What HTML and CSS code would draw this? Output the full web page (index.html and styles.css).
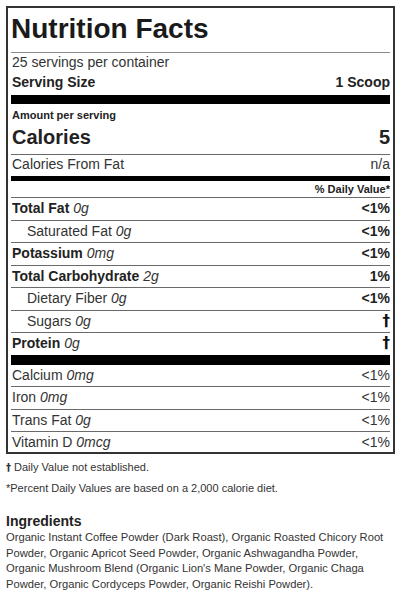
FILE: index.html
```html
<!DOCTYPE html>
<html lang="en">
<head>
<meta charset="utf-8">
<title>Nutrition Facts</title>
<link rel="stylesheet" href="styles.css">
</head>
<body>
<div class="label">
  <h1 class="title">Nutrition Facts</h1>
  <div class="servings">25 servings per container</div>
  <div class="row serving-size"><span>Serving Size</span><span>1 Scoop</span></div>
  <div class="bar bar-lg"></div>
  <div class="amount">Amount per serving</div>
  <div class="row calories"><span>Calories</span><span>5</span></div>
  <div class="row cff"><span>Calories From Fat</span><span>n/a</span></div>
  <div class="bar bar-md"></div>
  <div class="dv-head">% Daily Value*</div>

  <div class="row nut"><span><b>Total Fat</b> <i>0g</i></span><b>&lt;1%</b></div>
  <div class="row nut sub"><span>Saturated Fat <i>0g</i></span><b>&lt;1%</b></div>
  <div class="row nut"><span><b>Potassium</b> <i>0mg</i></span><b>&lt;1%</b></div>
  <div class="row nut"><span><b>Total Carbohydrate</b> <i>2g</i></span><b>1%</b></div>
  <div class="row nut sub"><span>Dietary Fiber <i>0g</i></span><b>&lt;1%</b></div>
  <div class="row nut sub"><span>Sugars <i>0g</i></span><b class="dagger">†</b></div>
  <div class="row nut last"><span><b>Protein</b> <i>0g</i></span><b class="dagger">†</b></div>

  <div class="bar bar-xl"></div>

  <div class="row nut"><span>Calcium <i>0mg</i></span><span>&lt;1%</span></div>
  <div class="row nut"><span>Iron <i>0mg</i></span><span>&lt;1%</span></div>
  <div class="row nut"><span>Trans Fat <i>0g</i></span><span>&lt;1%</span></div>
  <div class="row nut final"><span>Vitamin D <i>0mcg</i></span><span>&lt;1%</span></div>
</div>

<p class="note note-first"><span class="note-dagger">†</span> Daily Value not established.</p>
<p class="note">*Percent Daily Values are based on a 2,000 calorie diet.</p>

<h2 class="ing-title">Ingredients</h2>
<p class="ing-text">Organic Instant Coffee Powder (Dark Roast), Organic Roasted Chicory Root Powder, Organic Apricot Seed Powder, Organic Ashwagandha Powder, Organic Mushroom Blend (Organic Lion's Mane Powder, Organic Chaga Powder, Organic Cordyceps Powder, Organic Reishi Powder).</p>
</body>
</html>
```

FILE: styles.css
```css
html, body {
  background: #ffffff;
}

body {
  margin: 0;
  padding: 6px;
  font-family: "Liberation Sans", Arial, Helvetica, sans-serif;
  color: #333333;
}

.label {
  box-sizing: border-box;
  width: 389px;
  border: 2px solid #333333;
  padding: 0 3px;
  font-size: 14px;
}

.title {
  margin: 0;
  padding: 3px 0 5px;
  font-size: 28px;
  line-height: 36px;
  font-weight: bold;
  color: #1a1a1a;
  border-bottom: 1px solid #8a8a8a;
}

.servings {
  line-height: 18px;
  padding-left: 1px;
}

.row {
  display: flex;
  justify-content: space-between;
  align-items: center;
  white-space: nowrap;
  padding-left: 1px;
}

.row b {
  color: #222222;
}

.row i {
  font-style: italic;
  font-weight: normal;
}

.row .dagger {
  font-family: "DejaVu Sans", sans-serif;
  font-weight: bold;
  font-size: 15px;
  color: #111111;
}

.serving-size {
  line-height: 22px;
  padding-bottom: 2px;
  font-weight: bold;
  color: #222222;
}

.bar {
  background: #000000;
}

.bar-lg {
  height: 9px;
}

.bar-md {
  height: 5px;
}

.bar-xl {
  height: 10px;
}

.amount {
  font-size: 11px;
  line-height: 22px;
  font-weight: bold;
  color: #222222;
  padding-left: 1px;
}

.calories {
  font-size: 20px;
  line-height: 23px;
  padding-bottom: 5px;
  font-weight: bold;
  color: #222222;
  border-bottom: 1px solid #6a6a6a;
}

.cff {
  line-height: 18px;
  padding-bottom: 3px;
}

.dv-head {
  font-size: 11px;
  line-height: 16px;
  font-weight: bold;
  text-align: right;
  color: #222222;
  border-bottom: 1px solid #6a6a6a;
}

.nut {
  height: 21.5px;
  line-height: 21.5px;
  border-bottom: 1px solid #6a6a6a;
}

.nut.sub {
  padding-left: 16px;
}

.nut.last {
  border-bottom: none;
}

.nut.final {
  height: 20px;
  line-height: 20px;
  border-bottom: none;
}

.note {
  margin: 4px 0 0;
  font-size: 11px;
  line-height: 16px;
  color: #333333;
}

.note-dagger {
  font-family: "DejaVu Sans", sans-serif;
  font-weight: bold;
  font-size: 10px;
}

.note-first {
  margin-top: 5px;
}

.ing-title {
  margin: 16px 0 0;
  font-size: 14px;
  line-height: 18px;
  font-weight: bold;
  color: #222222;
}

.ing-text {
  margin: 0;
  font-size: 11.2px;
  line-height: 15.6px;
  color: #333333;
}
```
